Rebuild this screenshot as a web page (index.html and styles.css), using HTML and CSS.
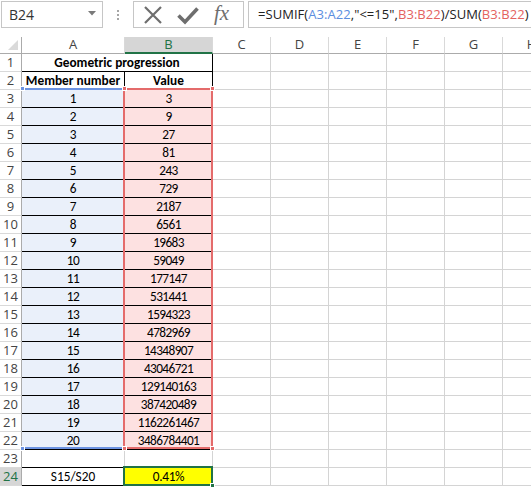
FILE: index.html
```html
<!DOCTYPE html>
<html>
<head>
<meta charset="utf-8">
<link rel="stylesheet" href="styles.css">
</head>
<body>
<div class="bar">
  <div class="namebox"><span class="ref">B24</span><svg class="dd" width="8" height="5" viewBox="0 0 8 5"><path d="M0 0H8L4 4.5Z" fill="#7a7a7a"/></svg></div>
  <div class="sep"><i></i><i></i><i></i></div>
  <div class="btns">
    <svg width="20" height="20" viewBox="0 0 20 20"><path d="M2 2L18 18M18 2L2 18" stroke="#6e6e6e" stroke-width="2.2" fill="none"/></svg>
    <svg width="22" height="20" viewBox="0 0 22 20"><path d="M1.5 10.5L8 17L20.5 3.5" stroke="#6e6e6e" stroke-width="3.6" fill="none"/></svg>
    <span class="fx">fx</span>
  </div>
  <div class="formula">=SUMIF(<span class="rb">A3:A22</span>,"&lt;=15",<span class="rr">B3:B22</span>)/SUM(<span class="rr">B3:B22</span>)</div>
</div>
<div class="sheet">
  <div class="corner"><svg width="10" height="10" viewBox="0 0 10 10"><path d="M10 0V10H0Z" fill="#dadada"/></svg></div><div class="ch">A</div><div class="ch sel">B</div><div class="ch">C</div><div class="ch">D</div><div class="ch">E</div><div class="ch">F</div><div class="ch">G</div><div class="ch last">H</div>

  <div class="rh">1</div><div class="c k m bold">Geometric progression</div><div class="c"></div><div class="c"></div><div class="c"></div><div class="c"></div><div class="c"></div><div class="c last"></div>
  <div class="rh">2</div><div class="c k bold">Member number</div><div class="c k bold">Value</div><div class="c"></div><div class="c"></div><div class="c"></div><div class="c"></div><div class="c"></div><div class="c last"></div>
  <div class="rh">3</div><div class="c k a">1</div><div class="c k b">3</div><div class="c"></div><div class="c"></div><div class="c"></div><div class="c"></div><div class="c"></div><div class="c last"></div>
  <div class="rh">4</div><div class="c k a">2</div><div class="c k b">9</div><div class="c"></div><div class="c"></div><div class="c"></div><div class="c"></div><div class="c"></div><div class="c last"></div>
  <div class="rh">5</div><div class="c k a">3</div><div class="c k b">27</div><div class="c"></div><div class="c"></div><div class="c"></div><div class="c"></div><div class="c"></div><div class="c last"></div>
  <div class="rh">6</div><div class="c k a">4</div><div class="c k b">81</div><div class="c"></div><div class="c"></div><div class="c"></div><div class="c"></div><div class="c"></div><div class="c last"></div>
  <div class="rh">7</div><div class="c k a">5</div><div class="c k b">243</div><div class="c"></div><div class="c"></div><div class="c"></div><div class="c"></div><div class="c"></div><div class="c last"></div>
  <div class="rh">8</div><div class="c k a">6</div><div class="c k b">729</div><div class="c"></div><div class="c"></div><div class="c"></div><div class="c"></div><div class="c"></div><div class="c last"></div>
  <div class="rh">9</div><div class="c k a">7</div><div class="c k b">2187</div><div class="c"></div><div class="c"></div><div class="c"></div><div class="c"></div><div class="c"></div><div class="c last"></div>
  <div class="rh">10</div><div class="c k a">8</div><div class="c k b">6561</div><div class="c"></div><div class="c"></div><div class="c"></div><div class="c"></div><div class="c"></div><div class="c last"></div>
  <div class="rh">11</div><div class="c k a">9</div><div class="c k b">19683</div><div class="c"></div><div class="c"></div><div class="c"></div><div class="c"></div><div class="c"></div><div class="c last"></div>
  <div class="rh">12</div><div class="c k a">10</div><div class="c k b">59049</div><div class="c"></div><div class="c"></div><div class="c"></div><div class="c"></div><div class="c"></div><div class="c last"></div>
  <div class="rh">13</div><div class="c k a">11</div><div class="c k b">177147</div><div class="c"></div><div class="c"></div><div class="c"></div><div class="c"></div><div class="c"></div><div class="c last"></div>
  <div class="rh">14</div><div class="c k a">12</div><div class="c k b">531441</div><div class="c"></div><div class="c"></div><div class="c"></div><div class="c"></div><div class="c"></div><div class="c last"></div>
  <div class="rh">15</div><div class="c k a">13</div><div class="c k b">1594323</div><div class="c"></div><div class="c"></div><div class="c"></div><div class="c"></div><div class="c"></div><div class="c last"></div>
  <div class="rh">16</div><div class="c k a">14</div><div class="c k b">4782969</div><div class="c"></div><div class="c"></div><div class="c"></div><div class="c"></div><div class="c"></div><div class="c last"></div>
  <div class="rh">17</div><div class="c k a">15</div><div class="c k b">14348907</div><div class="c"></div><div class="c"></div><div class="c"></div><div class="c"></div><div class="c"></div><div class="c last"></div>
  <div class="rh">18</div><div class="c k a">16</div><div class="c k b">43046721</div><div class="c"></div><div class="c"></div><div class="c"></div><div class="c"></div><div class="c"></div><div class="c last"></div>
  <div class="rh">19</div><div class="c k a">17</div><div class="c k b">129140163</div><div class="c"></div><div class="c"></div><div class="c"></div><div class="c"></div><div class="c"></div><div class="c last"></div>
  <div class="rh">20</div><div class="c k a">18</div><div class="c k b">387420489</div><div class="c"></div><div class="c"></div><div class="c"></div><div class="c"></div><div class="c"></div><div class="c last"></div>
  <div class="rh">21</div><div class="c k a">19</div><div class="c k b">1162261467</div><div class="c"></div><div class="c"></div><div class="c"></div><div class="c"></div><div class="c"></div><div class="c last"></div>
  <div class="rh">22</div><div class="c k a">20</div><div class="c k b">3486784401</div><div class="c"></div><div class="c"></div><div class="c"></div><div class="c"></div><div class="c"></div><div class="c last"></div>
  <div class="rh">23</div><div class="c kb"></div><div class="c"></div><div class="c"></div><div class="c"></div><div class="c"></div><div class="c"></div><div class="c"></div><div class="c last"></div>
  <div class="rh sel">24</div><div class="c k">S15/S20</div><div class="c y">0.41%</div><div class="c"></div><div class="c"></div><div class="c"></div><div class="c"></div><div class="c"></div><div class="c last"></div>

  <div class="hl-blue"><i class="sq tl"></i><i class="sq bl"></i></div>
  <div class="hl-red"><i class="sq tl"></i><i class="sq tr"></i><i class="sq bl"></i><i class="sq br"></i></div>
  <div class="hl-green"><i class="sq br"></i></div>
</div>
</body>
</html>
```
FILE: styles.css
```css
* { box-sizing: border-box; }
html, body { margin: 0; padding: 0; background: #fff; }
body { width: 531px; height: 489px; overflow: hidden; font-family: "Segoe UI", "Open Sans", "Noto Sans", sans-serif; }

.bar { height: 37px; display: flex; align-items: flex-start; padding-top: 1px; }
.namebox { margin-left: 1px; width: 102px; height: 27px; border: 1px solid #c6c6c6; display: flex; align-items: center; justify-content: space-between; padding: 0 6px 0 7px; flex: none; }
.ref { font-size: 14px; color: #333; }
.dd { margin-top: -2px; }
.sep { width: 30px; height: 27px; display: flex; flex-direction: column; align-items: center; justify-content: center; gap: 2px; flex: none; }
.sep i { display: block; width: 2px; height: 2px; background: #a6a6a6; }
.btns { width: 111px; height: 27px; border: 1px solid #c6c6c6; display: flex; align-items: center; padding-left: 9px; gap: 14px; flex: none; }
.fx { font-family: "Liberation Serif", "DejaVu Serif", serif; font-style: italic; font-size: 21px; color: #6e6e6e; margin-left: 1px; margin-top: -2px; }
.formula { flex: 1; min-width: 0; margin-left: 4px; height: 27px; border: 1px solid #c6c6c6; border-right: none; padding-left: 9px; font-size: 13px; letter-spacing: 0.05px; line-height: 25px; color: #222; white-space: nowrap; overflow: hidden; }
.rb { color: #5b8ee0; }
.rr { color: #e4625f; }

.sheet { position: relative; display: grid; grid-template-columns: 22px 103px 88px 58px 58px 58px 58px 58px 58px; grid-template-rows: 17px repeat(24, 18px); }
.corner { border-right: 1px solid #ababab; border-bottom: 1px solid #ababab; display: flex; align-items: flex-end; justify-content: flex-end; padding: 0 3px 3px 0; }
.ch { border-right: 1px solid #d9d9d9; border-bottom: 1px solid #ababab; text-align: center; font-size: 13px; line-height: 15px; color: #444; }
.ch.sel { background: #d6d6d6; color: #217346; border-bottom: 2px solid #217346; }
.rh { border-right: 1px solid #ababab; border-bottom: 1px solid #d9d9d9; text-align: center; font-size: 13px; line-height: 17px; color: #444; }
.rh.sel { background: #d6d6d6; color: #217346; }

.c { border-right: 1px solid #d4d4d4; border-bottom: 1px solid #d4d4d4; font-family: Carlito, Calibri, Lato, sans-serif; font-size: 13.3px; line-height: 17px; text-align: center; color: #000; white-space: nowrap; }
.c.last { border-right: none; }
.c.k { border-right-color: #000; border-bottom-color: #000; }
.c.kb { border-bottom-color: #000; }
.c.m { grid-column: span 2; }
.bold { font-weight: bold; }
.c.a { background: #eaf0fa; letter-spacing: -0.4px; }
.c.b { background: #fde1e1; letter-spacing: -0.6px; }
.c.y { background: #ffff00; letter-spacing: -0.3px; }

.hl-blue { position: absolute; left: 22px; top: 51px; width: 101px; height: 361px; border-top: 2px solid #6c93e2; border-bottom: 2px solid #6c93e2; }
.hl-red { position: absolute; left: 123px; top: 51px; width: 90px; height: 361px; border: 2px solid #e46b6b; }
.hl-green { position: absolute; left: 123px; top: 429px; width: 90px; height: 20px; border: 2px solid #217346; }
.sq { position: absolute; width: 5px; height: 5px; border: 1px solid #fff; }
.hl-blue .sq { background: #6c93e2; }
.hl-red .sq { background: #e46b6b; }
.hl-green .sq { background: #217346; }
.sq.tl { left: -3px; top: -4px; }
.sq.tr { right: -4px; top: -4px; }
.sq.bl { left: -3px; bottom: -4px; }
.sq.br { right: -4px; bottom: -4px; }
.hl-blue .sq.tl, .hl-blue .sq.bl { left: -2px; }
```
